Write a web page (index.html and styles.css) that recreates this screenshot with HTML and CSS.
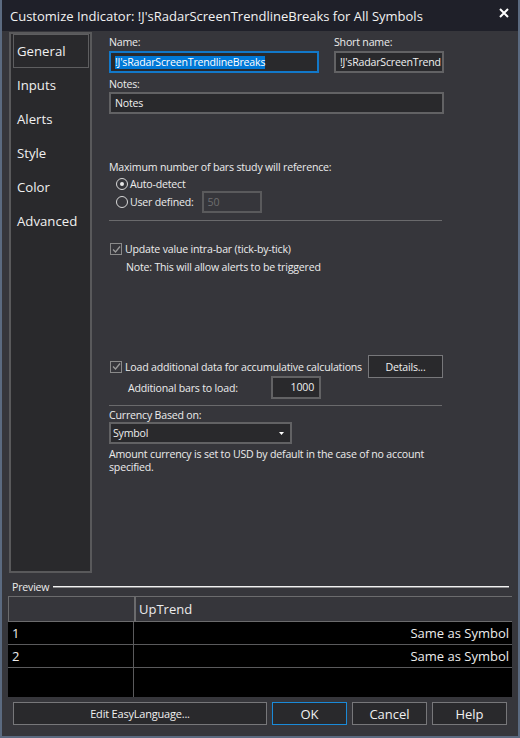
FILE: index.html
```html
<!DOCTYPE html>
<html>
<head>
<meta charset="utf-8">
<link rel="stylesheet" href="styles.css">
</head>
<body>
<div class="window">
  <div class="titlebar">
    <span class="title">Customize Indicator: !J'sRadarScreenTrendlineBreaks for All Symbols</span>
    <svg class="close" width="10" height="10" viewBox="0 0 10 10"><path d="M1 1 L9 9 M9 1 L1 9" stroke="#ffffff" stroke-width="2" fill="none"/></svg>
  </div>
  <div class="main">
    <nav class="sidebar">
      <div class="tab active">General</div>
      <div class="tab">Inputs</div>
      <div class="tab">Alerts</div>
      <div class="tab">Style</div>
      <div class="tab">Color</div>
      <div class="tab">Advanced</div>
    </nav>
    <div class="form">
      <div class="names">
        <div class="col col-name">
          <div class="lbl">Name:</div>
          <div class="input focus"><span class="selected">!J'sRadarScreenTrendlineBreaks</span></div>
        </div>
        <div class="col col-short">
          <div class="lbl">Short name:</div>
          <div class="input">!J'sRadarScreenTrend</div>
        </div>
      </div>
      <div class="lbl notes-lbl">Notes:</div>
      <div class="input notes">Notes</div>

      <div class="lbl max-lbl">Maximum number of bars study will reference:</div>
      <div class="radio-row auto">
        <span class="radio checked"></span><span>Auto-detect</span>
      </div>
      <div class="radio-row user">
        <span class="radio"></span><span>User defined:</span>
        <div class="input small disabled">50</div>
      </div>
      <div class="sep sep1"></div>

      <div class="check-row update">
        <span class="check"><svg width="9" height="9" viewBox="0 0 9 9"><path d="M1 4.5 L3.5 7 L8 1.5" stroke="#9a9a9a" stroke-width="1.3" fill="none"/></svg></span>
        <span>Update value intra-bar (tick-by-tick)</span>
      </div>
      <div class="note">Note: This will allow alerts to be triggered</div>

      <div class="check-row load">
        <span class="check"><svg width="9" height="9" viewBox="0 0 9 9"><path d="M1 4.5 L3.5 7 L8 1.5" stroke="#9a9a9a" stroke-width="1.3" fill="none"/></svg></span>
        <span class="load-text">Load additional data for accumulative calculations</span>
        <div class="btn details">Details...</div>
      </div>
      <div class="bars-row">
        <span class="bars-lbl">Additional bars to load:</span>
        <div class="input num">1000</div>
      </div>
      <div class="sep sep2"></div>

      <div class="lbl cur-lbl">Currency Based on:</div>
      <div class="select">
        <span>Symbol</span>
        <svg class="arrow" width="5" height="3" viewBox="0 0 5 3"><path d="M0 0 H5 L2.5 3 Z" fill="#ffffff"/></svg>
      </div>
      <div class="amount">Amount currency is set to USD by default in the case of no account specified.</div>
    </div>
  </div>

  <div class="preview-head">
    <span class="preview-lbl">Preview</span>
    <span class="preview-line"></span>
  </div>
  <div class="table">
    <div class="thead">
      <div class="c1"></div>
      <div class="c2">UpTrend</div>
    </div>
    <div class="trow">
      <div class="c1">1</div>
      <div class="c2">Same as Symbol</div>
    </div>
    <div class="trow">
      <div class="c1">2</div>
      <div class="c2">Same as Symbol</div>
    </div>
    <div class="trow last">
      <div class="c1"></div>
      <div class="c2"></div>
    </div>
  </div>

  <div class="buttons">
    <div class="btn edit">Edit EasyLanguage...</div>
    <div class="btn big ok">OK</div>
    <div class="btn big">Cancel</div>
    <div class="btn big">Help</div>
  </div>
</div>
</body>
</html>
```

FILE: styles.css
```css
* { box-sizing: border-box; }
html, body { margin: 0; padding: 0; background: #36363b; }
body {
  font-family: "Open Sans", "Noto Sans", sans-serif;
  font-size: 10.6px;
  letter-spacing: -0.2px;
  color: #ececec;
}
.window {
  width: 520px;
  height: 738px;
  background: #36363b;
  border-left: 2px solid #5b6a80;
  border-right: 2px solid #5b6a80;
  border-bottom: 2px solid #5b6a80;
  overflow: hidden;
}
.titlebar {
  height: 31px;
  background: #1f2029;
  display: flex;
  align-items: center;
  justify-content: space-between;
  padding: 0 11px 0 8px;
  margin: 0 -2px;
}
.title {
  font-size: 13px;
  letter-spacing: 0;
  color: #f2f2f2;
  margin-left: 2px;
  white-space: nowrap;
}
.close { margin-top: -5px; margin-right: 0; }

.main {
  display: flex;
  padding-top: 1px;
  height: 542px;
}
.sidebar {
  margin-left: 7px;
  width: 83px;
  height: 541px;
  background: #29292c;
  border: 2px solid #59595b;
}
.tab {
  height: 34px;
  line-height: 32px;
  font-size: 13.2px;
  letter-spacing: 0;
  padding-left: 3px;
  margin-left: 2px;
  width: 76px;
  border: 1px solid transparent;
  color: #f0f0f0;
}
.tab.active { border-color: #5e5e60; }

.form {
  margin-left: 17px;
  width: 335px;
  padding-top: 3px;
}
.lbl {
  height: 15px;
  line-height: 15px;
  white-space: nowrap;
}
.names { display: flex; justify-content: space-between; }
.col-name { width: 210px; }
.col-short { width: 110px; }
.input {
  height: 22px;
  margin-top: 1px;
  background: #29292c;
  border: 2px solid #626264;
  padding: 0 4px;
  line-height: 18px;
  white-space: nowrap;
  overflow: hidden;
  color: #f0f0f0;
}
.input.focus { border-color: #1278c9; }
.selected {
  background: #0078d7;
  color: #ffffff;
  display: inline-block;
  line-height: 13px;
  height: 13px;
}
.notes-lbl { margin-top: 4px; height: 14px; line-height: 14px; }
.input.notes { margin-top: 1px; }
.max-lbl { margin-top: 46px; }

.radio-row {
  display: flex;
  align-items: center;
  padding-left: 7px;
}
.radio-row.auto { height: 18px; }
.radio-row.user { height: 22px; margin-top: -2px; }
.radio {
  width: 12px;
  height: 12px;
  border: 1px solid #d8d8d8;
  border-radius: 50%;
  margin-right: 2px;
  position: relative;
  flex: none;
}
.radio.checked::after {
  content: "";
  position: absolute;
  left: 3px; top: 3px;
  width: 4px; height: 4px;
  border-radius: 50%;
  background: #e8e8e8;
}
.input.small {
  width: 60px;
  margin: 0 0 0 8px;
  color: #6e6e70;
  border-color: #5a5a5c;
  background: #36363b;
}
.sep {
  height: 1px;
  background: #6a6a6c;
  width: 333px;
}
.sep1 { margin-top: 7px; }

.check-row {
  display: flex;
  align-items: center;
  padding-left: 1px;
}
.check {
  width: 12px;
  height: 12px;
  border: 1px solid #8a8a8a;
  display: flex;
  align-items: center;
  justify-content: center;
  margin-right: 3px;
  flex: none;
}
.check-row.update { margin-top: 20px; height: 16px; }
.note { margin-top: 2px; height: 16px; line-height: 16px; padding-left: 17px; }

.check-row.load { margin-top: 80px; height: 23px; }
.load-text { flex: 1; white-space: nowrap; }
.btn {
  background: #29292c;
  border: 1px solid #77777a;
  display: flex;
  align-items: center;
  justify-content: center;
  color: #f0f0f0;
  white-space: nowrap;
}
.btn.details { width: 75px; height: 23px; margin-right: 1px; }
.bars-row {
  display: flex;
  align-items: center;
  height: 23px;
  margin-top: -2px;
  padding-left: 19px;
}
.bars-lbl { width: 143px; }
.input.num {
  width: 50px;
  height: 23px;
  margin: 0;
  text-align: right;
  padding-right: 5px;
  line-height: 19px;
}
.sep2 { margin-top: 6px; }
.cur-lbl { margin-top: 2px; height: 14px; line-height: 14px; }
.select {
  width: 183px;
  height: 22px;
  background: #29292c;
  border: 2px solid #626264;
  display: flex;
  align-items: center;
  justify-content: space-between;
  padding: 0 6px 0 2px;
}
.amount {
  margin-top: 4px;
  line-height: 13px;
  width: 335px;
}

.preview-head {
  display: flex;
  align-items: center;
  margin-top: 7px;
  height: 14px;
  padding-left: 10px;
}
.preview-line {
  flex: none;
  width: 456px;
  margin-left: 4px;
  height: 2px;
  border-top: 1px solid #f2f2f2;
  border-bottom: 1px solid #8a8a8c;
}
.table {
  margin-top: 2px;
  margin-left: 6px;
  width: 504px;
  font-size: 13px;
  letter-spacing: 0;
}
.thead {
  display: flex;
  height: 26px;
  border-top: 1px solid #6b6b6d;
  border-bottom: 1px solid #6b6b6d;
  border-left: 1px solid #6b6b6d;
  background: #36363b;
}
.thead .c1 { width: 127px; border-right: 2px solid #6b6b6d; }
.thead .c2 { flex: 1; line-height: 24px; padding-left: 3px; }
.trow {
  display: flex;
  height: 23px;
  background: #000000;
  border-bottom: 1px solid #5a5a5c;
}
.trow.last { height: 29px; border-bottom: none; }
.trow .c1 {
  width: 126px;
  border-right: 1px solid #5a5a5c;
  padding-left: 4px;
  line-height: 22px;
}
.trow .c2 {
  flex: 1;
  text-align: right;
  padding-right: 3px;
  line-height: 22px;
}
.buttons {
  display: flex;
  margin-top: 5px;
  margin-left: 11px;
  gap: 5px;
}
.buttons .btn { height: 23px; }
.btn.edit { width: 254px; font-size: 11px; letter-spacing: -0.2px; }
.btn.big { width: 75px; font-size: 13px; letter-spacing: 0; }
.btn.ok { border-color: #1a8ad8; }
```
